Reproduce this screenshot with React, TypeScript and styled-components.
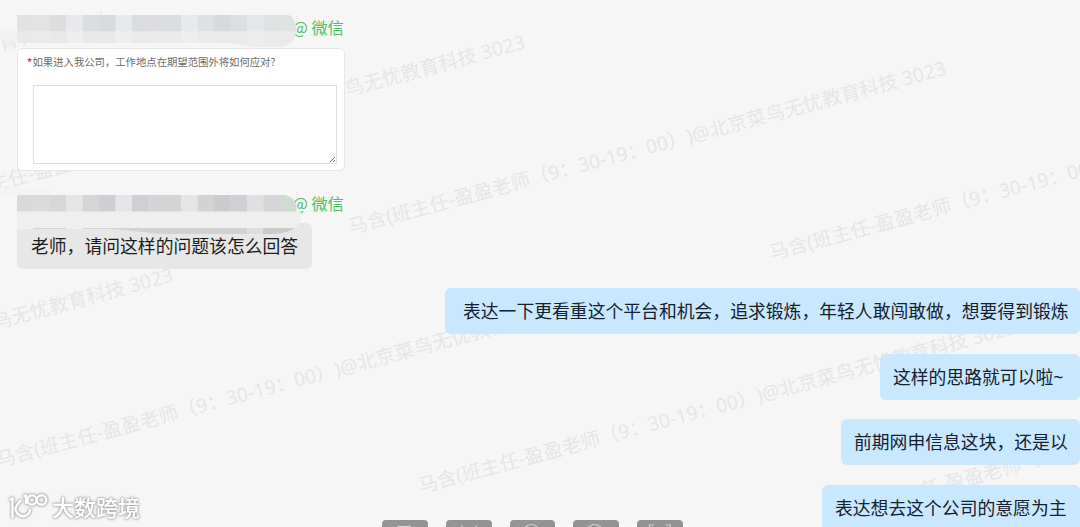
import styled, { createGlobalStyle } from "styled-components";

const watermarkText =
  "马含(班主任-盈盈老师（9：30-19：00）)@北京菜鸟无忧教育科技 3023";

// left end of each baseline
const watermarks = [
  { x: -491, y: 184 },
  { x: -70, y: 210 },
  { x: 351, y: 236 },
  { x: 772, y: 262 },
  { x: -422, y: 443 },
  { x: -1, y: 469 },
  { x: 421, y: 495 },
  { x: 842, y: 521 },
];

const replies = [
  { text: "表达一下更看重这个平台和机会，追求锻炼，年轻人敢闯敢做，想要得到锻炼", width: 635, indent: 18 },
  { text: "这样的思路就可以啦~", width: 200, indent: 13 },
  { text: "前期网申信息这块，还是以", width: 239, indent: 13 },
  { text: "表达想去这个公司的意愿为主", width: 258, indent: 13 },
];

const topCells = ["#e2e2e3", "#e3e3e4", "#dcdddf", "#e8e9ea", "#dcdde0", "#d8dade", "#e8e9ea", "#dbdcdf", "#dbdcdf", "#dcdde0", "#e8e9ea", "#dfe0e2", "#d8d9dd", "#dddee1", "#e6e7e8", "#e0e1e3", "#dfe4e0"];
const lowCells = ["#e8e9ea", "#e9eaeb", "#e8e8e9", "#eeeeef", "#e9e9ea", "#e8e8ea", "#eeeeef", "#e9eaea", "#ebebec", "#ebebec", "#eeeeef", "#ebebec", "#e9eaeb", "#e9eaea", "#ededee", "#e9eaea", "#e9eae9"];
const nameCells = ["#d9d9da", "#dadbdd", "#d6d7d9", "#e4e5e6", "#d4d5d7", "#cecfd2", "#e4e5e6", "#cfd0d3", "#d3d4d6", "#d3d4d6", "#e4e5e6", "#d3d3d5", "#cbccce", "#cfd0d3", "#dfe0e2", "#d5d6d8", "#d2dad4"];

function Mosaic({ second }: any) {
  const cells = second ? nameCells : topCells;
  return (
    <StyledMosaic viewBox="0 0 284 56">
      <clipPath id={second ? "maskB" : "maskA"}>
        {second ? (
          <path d="M0 0H268Q278 2 279 11Q286 16 283 27Q276 39 254 39H141L125 37L94 34H0Z" />
        ) : (
          <path d="M0 0H272Q279 3 279 16Q278 30 262 32H238L214 28H0Z" />
        )}
      </clipPath>
      {second ? (
        <rect x="-17" y="-7" width="50" height="7" fill="#f3f5f4" />
      ) : (
        <>
          <rect x="-17" y="-15" width="100" height="31" fill="#f6f6f6" />
          <rect x="-17" y="16" width="17" height="10" fill="#f1f2f3" />
        </>
      )}
      <g clipPath={second ? "url(#maskB)" : "url(#maskA)"}>
        <rect width="284" height="56" fill={second ? "#efefef" : "#ebecec"} />
        {cells.map((fill, i) => (
          <rect key={i} x={i * 16.42} width="16.6" height="16.5" fill={fill} />
        ))}
        {!second &&
          lowCells.map((fill, i) => (
            <rect key={i} x={i * 16.42} y="16.5" width="16.6" height="16" fill={fill} />
          ))}
        {second && (
          <>
            <rect x="16" y="33" width="33" height="6" fill="#d2d2d3" />
            <rect x="66" y="33" width="164" height="6" fill="#d2d2d2" />
            <rect x="230" y="33" width="16" height="6" fill="#dedede" />
            <rect x="246" y="33" width="36" height="6" fill="#cacaca" />
          </>
        )}
      </g>
    </StyledMosaic>
  );
}

function Toolbar() {
  return (
    <StyledToolbar>
      <StyledTool>
        <svg viewBox="0 0 46 46"><path d="M15.5 6.5H29" /></svg>
      </StyledTool>
      <StyledTool>
        <svg viewBox="0 0 46 46"><path d="M15.5 5.5L18 9M31 5.5L28.5 9" /></svg>
      </StyledTool>
      <StyledTool>
        <svg viewBox="0 0 46 46"><circle cx="21.5" cy="13" r="8.5" /></svg>
      </StyledTool>
      <StyledTool>
        <svg viewBox="0 0 46 46"><circle cx="21.5" cy="13" r="8.5" /></svg>
      </StyledTool>
      <StyledTool>
        <svg viewBox="0 0 46 46"><path d="M12.5 10V5H17M29 5H33.5V10" /></svg>
      </StyledTool>
    </StyledToolbar>
  );
}

export default function App() {
  return (
    <StyledPage>
      <GlobalStyle />
      {watermarks.map((mark) => (
        <StyledWatermark key={mark.x} style={{ left: mark.x, top: mark.y - 24 }}>
          {watermarkText}
        </StyledWatermark>
      ))}

      <StyledChat>
        <StyledSender>
          <Mosaic />
          <StyledSource>@ 微信</StyledSource>
        </StyledSender>
        <StyledCard>
          <StyledQuestion>
            <b>*</b>如果进入我公司，工作地点在期望范围外将如何应对?
          </StyledQuestion>
          <StyledAnswer>
            <svg width="7" height="7" viewBox="0 0 7 7">
              <path d="M1 6L6 1M4 6L6 4" stroke="#777" fill="none" />
            </svg>
          </StyledAnswer>
        </StyledCard>
        <StyledSender $second>
          <Mosaic second />
          <StyledSource $second>@ 微信</StyledSource>
        </StyledSender>
        <StyledAsk>老师，请问这样的问题该怎么回答</StyledAsk>

        <StyledReplies>
          {replies.map((reply) => (
            <StyledReply key={reply.text} $width={reply.width} $indent={reply.indent}>
              {reply.text}
            </StyledReply>
          ))}
        </StyledReplies>
      </StyledChat>

      <StyledBrand>
        <svg width="41" height="30" viewBox="0 0 41 30">
          <path d="M1.5 9L4.5 7.5V27M13 9L9 14Q6 18 9 22Q12 26 17 25Q22 23 22 18" />
          <path d="M15.5 5L18 4.5V13" />
          <circle cx="24" cy="9" r="4.6" />
          <circle cx="33.5" cy="9" r="4.8" />
        </svg>
        <span>大数跨境</span>
      </StyledBrand>
      <Toolbar />
    </StyledPage>
  );
}

const GlobalStyle = createGlobalStyle`
  body {
    margin: 0;
    background: #f6f6f6;
    font-family: "Noto Sans CJK SC", "Noto Sans", sans-serif;
  }
  * {
    box-sizing: border-box;
  }
`;

const StyledPage = styled.div`
  position: relative;
  width: 1080px;
  height: 527px;
  overflow: hidden;
  background: #f6f6f6;
`;

const StyledWatermark = styled.div`
  position: absolute;
  height: 30px;
  line-height: 30px;
  font-size: 19.4px;
  font-family: "Noto Sans", "Noto Sans CJK SC", sans-serif;
  letter-spacing: 0.08px;
  text-spacing-trim: space-all;
  color: #e5e6e9;
  white-space: pre;
  transform: rotate(-15deg);
  transform-origin: 0 24px;
`;

const StyledChat = styled.div`
  position: relative;
  display: flex;
  flex-direction: column;
  align-items: flex-start;
  padding: 15px 0 0 17px;
`;

const StyledSender = styled.div<{ $second?: boolean }>`
  display: flex;
  width: 328px;
  height: ${(props) => (props.$second ? 28 : 33)}px;
  margin-top: ${(props) => (props.$second ? 24 : 0)}px;
  position: relative;
  z-index: 1;
`;

const StyledMosaic = styled.svg`
  flex: none;
  position: relative;
  z-index: 1;
  width: 284px;
  height: 56px;
  overflow: visible;
`;

const StyledSource = styled.span<{ $second?: boolean }>`
  margin-left: -8.5px;
  height: 26px;
  line-height: ${(props) => (props.$second ? 16 : 25)}px;
  font-size: 16.2px;
  color: #4fbf68;
  white-space: pre;
`;

const StyledCard = styled.div`
  width: 328px;
  height: 123px;
  padding: 4px 7px 6px 9px;
  border: 1px solid #e6e6e6;
  border-radius: 5px;
  background: #fff;
`;

const StyledQuestion = styled.div`
  height: 17px;
  line-height: 17px;
  font-size: 10.35px;
  color: #6c6c6c;
  white-space: nowrap;

  b {
    display: inline-block;
    width: 5.5px;
    color: #e33;
  }
`;

const StyledAnswer = styled.div`
  display: flex;
  align-items: flex-end;
  justify-content: flex-end;
  width: 304px;
  height: 79px;
  margin: 15px 0 0 5.5px;
  border: 1px solid #dfdfe2;
`;

const StyledBubble = styled.div`
  height: 46px;
  line-height: 47px;
  border-radius: 6px;
  font-family: "Noto Sans", "Noto Sans CJK SC", sans-serif;
  font-size: 17.82px;
  color: #1c1c1c;
  white-space: nowrap;
`;

const StyledAsk = styled(StyledBubble)`
  width: 295px;
  padding-left: 14px;
  background: #e7e7e7;
`;

const StyledReplies = styled.div`
  display: flex;
  flex-direction: column;
  align-items: flex-end;
  align-self: stretch;
  gap: 19.7px;
  margin-top: 19px;
`;

const StyledReply = styled(StyledBubble)<{ $width: number; $indent: number }>`
  width: ${(props) => props.$width}px;
  padding-left: ${(props) => props.$indent}px;
  background: #c9e7ff;
  color: #14202b;
`;

const StyledBrand = styled.div`
  position: absolute;
  left: 8px;
  bottom: 5px;
  display: flex;
  align-items: center;
  gap: 3px;
  height: 32px;
  font-size: 22px;
  line-height: 28px;
  font-weight: 500;
  color: #fff;
  filter: drop-shadow(0 0 1px #aaa) drop-shadow(0 0 1px #aaa);

  svg {
    fill: none;
    stroke: #fff;
    stroke-width: 2.4;
  }
`;

const StyledToolbar = styled.div`
  position: absolute;
  left: 382px;
  top: 519.5px;
  display: flex;
  gap: 18px;
`;

const StyledTool = styled.div`
  width: 45.8px;
  height: 46px;
  border-radius: 4px;
  background: #949494;

  svg {
    fill: none;
    stroke: #d5d5d5;
    stroke-width: 1.2;
  }
`;
